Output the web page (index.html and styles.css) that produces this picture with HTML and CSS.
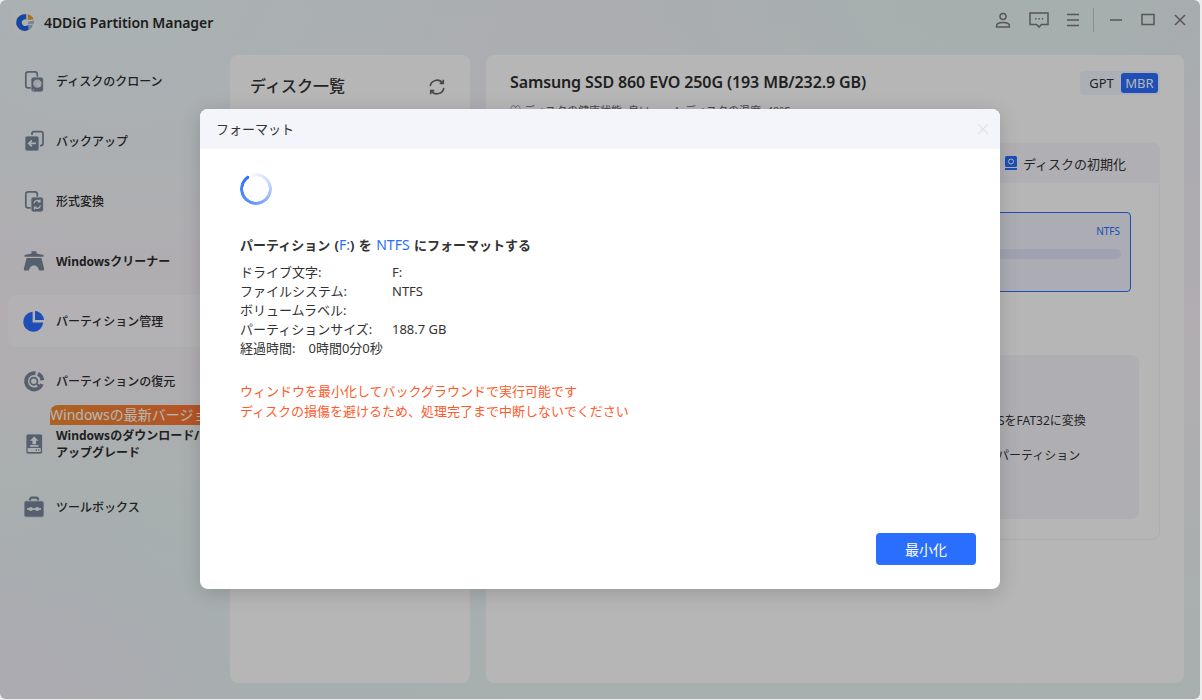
FILE: index.html
```html
<!DOCTYPE html>
<html lang="ja">
<head>
<meta charset="utf-8">
<title>4DDiG Partition Manager</title>
<link rel="stylesheet" href="styles.css">
</head>
<body>
<div class="app">
  <header class="titlebar">
    <div class="brand">
      <span class="logo">
        <svg viewBox="1.4 1.4 18.4 18.4" width="22" height="22">
          <path d="M12.5 4.200A7 7 0 1 0 17.600 13.500L13 13.500A2.800 2.800 0 1 1 12.500 8.500Z" fill="#1f62e0"/>
          <path d="M13.800 4.200A7 7 0 0 1 18.600 8.200L13.800 9Z" fill="#e3a32a"/>
          <path d="M14 10.200L19 9.400A7 7 0 0 1 18.600 12.400L14 12.400Z" fill="#a9bbd9"/>
          <path d="M14 13.600H18A7 7 0 0 1 14.600 17.600Z" fill="#a9bbd9"/>
        </svg>
      </span>
      <span class="brand-name">4DDiG Partition Manager</span>
    </div>
    <div class="win-tools">
      <svg class="win-ico user" viewBox="0 0 16 16" width="16" height="16"><circle cx="8" cy="4.600" r="3"/><path d="M1.600 15v-1.200c0-2 2.200-3.400 6.400-3.400s6.400 1.400 6.400 3.400V15Z"/></svg>
      <svg class="win-ico chat" viewBox="0 0 20 16" width="20" height="16"><path d="M1 1h18v11.600h-6.600L10 15l-2.400-2.400H1Z"/><path class="dots" d="M6 6.800h1.400M9.400 6.800h1.400M12.800 6.800h1.400"/></svg>
      <svg class="win-ico menu" viewBox="0 0 14 14" width="14" height="14"><path d="M1 1.500h12M1 7h12M1 12.500h12"/></svg>
      <span class="win-sep"></span>
      <svg class="win-ico min" viewBox="0 0 14 14" width="14" height="14"><path d="M1 7h12"/></svg>
      <svg class="win-ico max" viewBox="0 0 14 14" width="14" height="14"><rect x="1" y="1.500" width="12" height="10"/></svg>
      <svg class="win-ico close" viewBox="0 0 14 14" width="14" height="14"><path d="M2 2l10 10M12 2L2 12"/></svg>
    </div>
  </header>

  <div class="content">
    <nav class="sidebar">
      <div class="nav-item">
        <svg class="nav-icon" viewBox="0 0 24 24" width="24" height="24"><rect class="ol" x="3.800" y="2.800" width="11.500" height="16" rx="2.400"/><rect class="so" x="9" y="8" width="12.400" height="15" rx="2.400"/><circle class="hole" cx="15.400" cy="14.600" r="4.200"/><path class="cut" d="M15.400 14.600l3 3"/><circle class="hole" cx="11.400" cy="21" r=".8"/></svg>
        <span class="nav-label">ディスクのクローン</span>
      </div>
      <div class="nav-item">
        <svg class="nav-icon" viewBox="0 0 24 24" width="24" height="24"><path class="ol" d="M10 6V4.600A2 2 0 0 1 12 2.600h7A2 2 0 0 1 21 4.600v10a2 2 0 0 1-2 2h-1"/><rect class="so" x="3" y="7" width="14" height="15" rx="2"/><path class="cut" d="M14 14.400H7M9.800 11.400L6.800 14.400l3 3"/></svg>
        <span class="nav-label">バックアップ</span>
      </div>
      <div class="nav-item">
        <svg class="nav-icon" viewBox="0 0 24 24" width="24" height="24"><rect class="ol" x="3.800" y="2.800" width="11.500" height="16" rx="2.400"/><rect class="so" x="9" y="8" width="12.400" height="15" rx="2.400"/><path class="cut thin" d="M12 14.400a3.400 3.400 0 0 1 5.800-2M18.400 16.400a3.400 3.400 0 0 1-5.800 2M18 10.400v2.400h-2.400M12.400 20.400V18h2.400"/></svg>
        <span class="nav-label">形式変換</span>
      </div>
      <div class="nav-item">
        <svg class="nav-icon" viewBox="0 0 24 24" width="24" height="24"><path class="fill" d="M9.500 2.200h5v2.200l7 1.600v1.800H2.500V6l7-1.600Z"/><path class="fill" d="M4.600 9h14.800l2.800 11a1.400 1.400 0 0 1-1.400 1.600h-3.600c-.7-2.400-2-5-5.200-5s-4.500 2.600-5.200 5H3.200a1.400 1.400 0 0 1-1.400-1.600Z"/></svg>
        <span class="nav-label strong">Windowsクリーナー</span>
      </div>
      <div class="nav-item active">
        <svg class="nav-icon" viewBox="0 0 24 24" width="24" height="24"><path class="blue" d="M10.600 2.800v10.600H21.200A10 10 0 1 1 10.600 2.800Z"/><path class="blue" d="M13 1.800A9.800 9.800 0 0 1 22 11h-9Z"/></svg>
        <span class="nav-label">パーティション管理</span>
      </div>
      <div class="nav-item">
        <svg class="nav-icon" viewBox="0 0 24 24" width="24" height="24"><path class="ring" d="M13.500 4.200a8.200 8.200 0 1 0 6.400 11"/><path class="ring" d="M16 4.800a8.200 8.200 0 0 1 4.300 6.400"/><circle class="ol" cx="11.800" cy="12.200" r="3.600"/><path class="ol wide" d="M15 15l3.400 3.600"/></svg>
        <span class="nav-label">パーティションの復元</span>
      </div>
      <div class="nav-item tall">
        <span class="promo">Windowsの最新バージョン</span>
        <svg class="nav-icon" viewBox="0 0 24 24" width="24" height="24"><rect class="so" x="4" y="2" width="16.500" height="20" rx="2"/><path class="cut-fill" d="M12.200 4.500l4.300 4.300h-2.500v3.400h-3.600V8.800H7.900Z"/><path class="cut" d="M8 13.900h8.500"/><rect class="cut-fill" x="5.600" y="16" width="13.200" height="4" rx=".8"/><path class="dark" d="M13.800 18h1.200M16.200 18h1.200"/></svg>
        <span class="nav-label strong">Windowsのダウンロード/<br>アップグレード</span>
      </div>
      <div class="nav-item">
        <svg class="nav-icon" viewBox="0 0 24 24" width="24" height="24"><path class="ol wide" d="M8 6.500V4.500a1.800 1.800 0 0 1 1.800-1.800h4.400A1.800 1.800 0 0 1 16 4.500v2"/><rect class="so" x="2" y="5.800" width="20" height="16.400" rx="2"/><path class="cut" d="M5 14h14"/><circle class="cut-fill" cx="8.800" cy="14" r="2"/><circle class="cut-fill" cx="15.200" cy="14" r="2"/></svg>
        <span class="nav-label">ツールボックス</span>
      </div>
    </nav>

    <section class="panel disks">
      <div class="disks-head">
        <h2 class="disks-title">ディスク一覧</h2>
        <svg class="refresh" viewBox="0 0 20 20" width="20" height="20"><path d="M3.200 9.200A6.900 6.900 0 0 1 15.600 6M16.800 10.800A6.900 6.900 0 0 1 4.400 14M16.300 2.800V6.400H12.700M3.700 17.200V13.600H7.300"/></svg>
      </div>
    </section>

    <section class="panel detail">
      <div class="detail-head">
        <h1 class="disk-name">Samsung SSD 860 EVO 250G (193 MB/232.9 GB)</h1>
        <div class="switch"><span class="sw-off">GPT</span><span class="sw-on">MBR</span></div>
      </div>
      <p class="disk-meta">♡ ディスクの健康状態: 良い　　♙ ディスクの温度: 40℃</p>
      <div class="workspace">
        <div class="tabs">
          <span class="tab">
            <svg class="tab-ico" viewBox="0 0 12 14" width="12" height="14"><rect x="0" y="0" width="12" height="11" rx="1.500" fill="#2a6eff"/><circle cx="6" cy="5.500" r="2.500" fill="none" stroke="#fff" stroke-width="1"/><rect x="0" y="12" width="12" height="2" fill="#2a6eff"/></svg>
            ディスクの初期化
          </span>
        </div>
        <div class="card-wrap">
          <div class="part-card">
            <div class="part-fs">NTFS</div>
            <div class="part-bar"></div>
          </div>
        </div>
        <div class="ops">
          <div class="op">NTFSをFAT32に変換</div>
          <div class="op op-alt">隠しパーティション</div>
        </div>
      </div>
    </section>
  </div>

  <div class="scrim">
    <div class="modal">
      <div class="modal-head">
        <span class="modal-title">フォーマット</span>
        <svg class="modal-close" viewBox="0 0 12 12" width="12" height="12"><path d="M1 1l10 10M11 1L1 11"/></svg>
      </div>
      <div class="modal-body">
        <div class="spinner"></div>
        <p class="lead">パーティション (<span class="hl">F:</span>) を <span class="hl">NTFS</span> にフォーマットする</p>
        <dl class="facts">
          <div class="fact"><dt>ドライブ文字:</dt><dd>F:</dd></div>
          <div class="fact"><dt>ファイルシステム:</dt><dd>NTFS</dd></div>
          <div class="fact"><dt>ボリュームラベル:</dt><dd></dd></div>
          <div class="fact"><dt>パーティションサイズ:</dt><dd>188.7 GB</dd></div>
          <div class="fact elapsed"><dt>経過時間:</dt><dd>0時間0分0秒</dd></div>
        </dl>
        <p class="warn">ウィンドウを最小化してバックグラウンドで実行可能です<br>ディスクの損傷を避けるため、処理完了まで中断しないでください</p>
        <div class="modal-foot"><button class="btn" type="button">最小化</button></div>
      </div>
    </div>
  </div>
</div>
</body>
</html>
```
FILE: styles.css
```css
* { box-sizing: border-box; }
html, body { margin: 0; padding: 0; }
body {
  width: 1202px;
  height: 700px;
  overflow: hidden;
  background: #ececec;
  font-family: "Noto Sans", "Noto Sans CJK JP", sans-serif;
  color: #333;
}
.app {
  position: relative;
  width: 1200px;
  height: 699px;
  border-radius: 6px;
  overflow: hidden;
  display: flex;
  flex-direction: column;
  background:
    radial-gradient(ellipse 300px 220px at 0% 100%, #f3eff9 0%, rgba(243,239,249,0) 100%),
    radial-gradient(ellipse 420px 200px at 87% 0%, #e6f6f3 0%, rgba(230,246,243,0) 100%),
    radial-gradient(ellipse 300px 300px at 100% 5%, #f3edf8 0%, rgba(243,237,248,0) 100%),
    radial-gradient(ellipse 500px 200px at 10% 84%, #e8f6f5 0%, rgba(232,246,245,0) 100%),
    radial-gradient(ellipse 400px 260px at 10% 0%, #eef9fb 0%, rgba(238,249,251,0) 100%),
    linear-gradient(180deg, #f0f3f8 0%, #f8f3f8 45%, #eaf5f5 100%);
}
.titlebar {
  height: 55px;
  flex: none;
  display: flex;
  align-items: flex-start;
  justify-content: space-between;
  padding: 10px 13px 0 13px;
}
.brand { display: flex; align-items: center; height: 24px; gap: 9px; }
.logo {
  width: 22px;
  height: 22px;
  border-radius: 4px;
  background: #f6f8f9;
  display: flex;
}
.brand-name { font-size: 14px; font-weight: 600; color: #2a2a2a; letter-spacing: -.08px; }
.win-tools { display: flex; align-items: center; height: 20px; }
.win-ico { fill: none; stroke: #7a7a7a; stroke-width: 1.5; display: block; }
.user { margin-right: 18px; }
.chat { margin-right: 17px; }
.chat .dots { stroke-width: 1.4; }
.menu { margin-right: 13px; }
.win-sep { width: 1px; height: 24px; background: #c5c7cb; margin-right: 15px; }
.min { margin-right: 18px; }
.max { margin-right: 18px; }

.content {
  flex: 1;
  min-height: 0;
  display: flex;
  padding: 0 16px 16px 0;
}
.sidebar { width: 230px; flex: none; }
.nav-item {
  position: relative;
  height: 52px;
  margin: 0 0 8px 8px;
  padding-left: 14px;
  display: flex;
  align-items: center;
  gap: 10px;
  border-radius: 8px;
  width: 214px;
}
.nav-item.tall { height: 58px; }
.nav-item.active { background: rgba(255,255,255,.42); }
.nav-label { font-size: 12px; line-height: 17px; font-weight: 500; color: #2e2e2e; white-space: nowrap; }
.nav-label.strong { font-weight: 700; }
.nav-icon { flex: none; display: block; }
.nav-icon .ol { fill: none; stroke: #77859a; stroke-width: 1.7; }
.nav-icon .wide { stroke-width: 2.2; }
.nav-icon .so { fill: #77859a; stroke: #eef2f4; stroke-width: .8; }
.nav-icon .fill { fill: #77859a; }
.nav-icon .hole { fill: #dfe3e8; }
.nav-icon .cut { fill: none; stroke: #f2f4f6; stroke-width: 1.7; }
.nav-icon .cut.thin { stroke-width: 1.2; }
.nav-icon .cut-fill { fill: #f2f4f6; }
.nav-icon .dark { fill: none; stroke: #77859a; stroke-width: 1.4; }
.nav-icon .blue { fill: #2a6eff; }
.nav-icon .ring { fill: none; stroke: #77859a; stroke-width: 3.800; }
.promo {
  position: absolute;
  left: 42px;
  top: -10px;
  height: 20px;
  border-radius: 8px 0 0 0;
  background: linear-gradient(90deg, #f18a32, #ff7237);
  color: #fff;
  font-size: 14px;
  line-height: 20px;
  white-space: nowrap;
}

.panel {
  background: #fff;
  border-radius: 8px;
}
.disks { width: 240px; flex: none; margin-right: 16px; padding: 19px 20px 20px; }
.disks-head { display: flex; align-items: center; justify-content: space-between; padding-right: 3px; }
.disks-title { margin: 0; font-size: 16px; line-height: 24px; font-weight: 500; color: #333; }
.refresh { fill: none; stroke: #666; stroke-width: 1.6; margin-top: 2px; }
.detail { flex: 1; padding: 16px 24px 0; min-width: 0; }
.detail-head { display: flex; justify-content: space-between; align-items: flex-start; }
.disk-name { margin: 0; font-size: 16px; line-height: 22px; font-weight: 600; color: #2e2e2e; letter-spacing: -.12px; }
.switch {
  display: flex;
  height: 24px;
  padding: 2px;
  border-radius: 4px;
  background: #f2f6ff;
  font-size: 13px;
  line-height: 20px;
}
.sw-off { width: 39px; text-align: center; color: #333; }
.sw-on { width: 37px; text-align: center; color: #fff; background: #2a6eff; border-radius: 3px; }
.disk-meta { margin: 9px 0 0; font-size: 11px; line-height: 14px; color: #666; white-space: nowrap; }
.workspace {
  margin-top: 25px;
  height: 397px;
  border: 1px solid #f0f0fb;
  border-radius: 8px;
  width: 650px;
}
.tabs {
  height: 40px;
  margin: -1px -1px 0;
  background: #f6f6fd;
  border-radius: 8px 8px 0 0;
  display: flex;
  align-items: center;
  justify-content: flex-end;
  padding-right: 34px;
}
.tab { display: flex; align-items: center; gap: 6px; font-size: 13px; color: #333; }
.tab-ico { display: block; }
.card-wrap { padding: 29px 28px 0 20px; }
.part-card {
  height: 80px;
  border: 1px solid #2a6eff;
  border-radius: 4px;
  background: #f0f2fc;
  padding: 10px 10px 0;
}
.part-fs { text-align: right; font-size: 10px; line-height: 16px; color: #2a6eff; }
.part-bar { height: 10px; margin: 10px -1px 0 0; border-radius: 5px; background: #e0e4f9; }
.ops {
  height: 164px;
  margin: 63px 20px 0 20px;
  padding: 57px 0 0 445px;
  border-radius: 8px;
  background: #f6f6fb;
  font-size: 12px;
  color: #333;
}
.op { line-height: 18px; margin-bottom: 17px; white-space: nowrap; }
.op-alt { margin-left: -3px; }

.scrim {
  position: absolute;
  inset: 0;
  background: rgba(0,0,0,.285);
  display: flex;
  justify-content: center;
  align-items: flex-start;
  padding-top: 109px;
}
.modal {
  width: 800px;
  height: 480px;
  background: #fff;
  border-radius: 8px;
  overflow: hidden;
  box-shadow: 0 4px 20px rgba(0,0,0,.16);
  display: flex;
  flex-direction: column;
}
.modal-head {
  height: 40px;
  flex: none;
  background: #f4f5fa;
  display: flex;
  align-items: center;
  justify-content: space-between;
  padding: 0 11px 0 16px;
}
.modal-title { font-size: 13px; color: #333; padding-bottom: 2px; }
.modal-close { fill: none; stroke: #e2e3e8; stroke-width: 1.300; display: block; }
.modal-body { flex: 1; padding: 24px 24px 24px 40px; display: flex; flex-direction: column; color: #333; }
.spinner {
  width: 32px;
  height: 32px;
  border-radius: 50%;
  flex: none;
  background: conic-gradient(from 330deg, rgba(42,110,255,0) 0deg, rgba(42,110,255,.25) 90deg, rgba(42,110,255,.7) 210deg, #2a6eff 360deg);
  -webkit-mask: radial-gradient(circle, transparent 12.500px, #000 13px);
  mask: radial-gradient(circle, transparent 12.500px, #000 13px);
}
.lead { margin: 31px 0 0; font-size: 13px; line-height: 18px; font-weight: 700; color: #333; word-spacing: 1px; }
.hl { color: #2a6eff; font-weight: 400; font-size: 14px; }
.facts { margin: 9px 0 0; font-size: 13px; line-height: 19px; color: #333; }
.fact { display: flex; }
.fact dt { width: 152px; flex: none; }
.fact dd { margin: 0; }
.fact.elapsed dt { width: auto; margin-right: 13px; }
.warn { margin: 23px 0 0; font-size: 13px; line-height: 20px; color: #ff5a2c; }
.modal-foot { margin-top: auto; display: flex; justify-content: flex-end; }
.btn {
  width: 100px;
  height: 32px;
  border: 0;
  border-radius: 4px;
  background: #2a6eff;
  color: #fff;
  font-family: inherit;
  font-size: 14px;
  padding: 0;
}
```
